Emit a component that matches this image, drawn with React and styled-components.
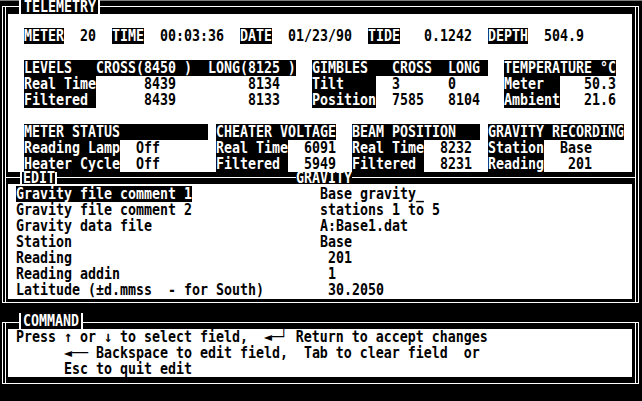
import React from 'react';
import styled, { createGlobalStyle } from 'styled-components';

const GlobalStyle = createGlobalStyle`
  html, body { margin: 0; padding: 0; background: #000; }
  #root { width: 642px; height: 401px; }
`;

const hl = (x, y, w) => `linear-gradient(#fff, #fff) ${x}px ${y}px / ${w}px 1px no-repeat`;
const vl = (x, y, h) => `linear-gradient(#fff, #fff) ${x}px ${y}px / 1px ${h} no-repeat`;
const sides = (y, h) => [vl(2, y, h), vl(5, y, h), vl(635, y, h), vl(638, y, h)];

const Screen = styled.div`
  width: 642px;
  height: 401px;
  overflow: hidden;
  background: #000;
  display: flex;
  flex-direction: column;
  font-family: "DejaVu Sans Mono", "Liberation Mono", monospace;
  font-weight: bold;
  font-size: 13.29px;
  color: #000;
`;

const Band = styled.div`
  flex: none;
  display: flex;
  align-items: stretch;
  height: ${(p) => p.$h}px;
  background: ${(p) => p.$lines.join(', ')}, #000;
`;

const Tab = styled.div`
  flex: none;
  box-sizing: border-box;
  margin-left: ${(p) => p.$at}px;
  padding: 0 ${(p) => p.$pr}px 0 ${(p) => p.$pl}px;
  border-left: ${(p) => (p.$bare ? '0' : '2px solid #fff')};
  border-right: ${(p) => (p.$bare ? '0' : '2px solid #fff')};
  background: #000;
  color: #fff;
`;

const Panel = styled.div`
  flex: none;
  display: flex;
  height: ${(p) => p.$h}px;
`;

const Rail = styled.div`
  flex: none;
  width: ${(p) => (p.$right ? 10 : 8)}px;
  background: ${(p) =>
      p.$right
        ? `${vl(3, 0, '100%')}, ${vl(6, 0, '100%')}`
        : `${vl(2, 0, '100%')}, ${vl(5, 0, '100%')}`},
    #000;
`;

const Body = styled.div`
  flex: 1;
  min-width: 0;
  display: flex;
  flex-direction: column;
  padding-top: ${(p) => p.$pt || 0}px;
  background: #fff;
  overflow: hidden;
`;

const Line = styled.div`
  flex: none;
  display: flex;
  height: 16px;
`;

const Cell = styled.span`
  flex: none;
  display: block;
  height: 16px;
  width: ${(p) => p.$n * 8}px;
  background: ${(p) => (p.$inv ? '#000' : 'transparent')};
  color: ${(p) => (p.$inv ? '#fff' : '#000')};
`;

const Txt = styled.span`
  display: block;
  white-space: pre;
  line-height: ${(p) => p.$lh || 16}px;
  transform: scaleY(1.15);
  transform-origin: 50% 45%;
`;

const C = ({ inv, children }) => (
  <Cell $n={children.length} $inv={inv}>
    <Txt>{children}</Txt>
  </Cell>
);

const gravityFields = [
  ['Gravity file comment 1', 'Base gravity_', true],
  ['Gravity file comment 2', 'stations 1 to 5'],
  ['Gravity data file', 'A:Base1.dat'],
  ['Station', 'Base'],
  ['Reading', ' 201'],
  ['Reading addin', ' 1'],
  ['Latitude (±d.mmss  - for South)', ' 30.2050'],
];

export default function App() {
  return (
    <>
      <GlobalStyle />
      <Screen>
        <Band
          $h={14}
          $lines={[
            'linear-gradient(#808080, #808080) 0 0 / 100% 1px no-repeat',
            hl(2, 6, 637),
            ...sides(6, '8px'),
          ]}
        >
          <Tab $at={19} $pl={3} $pr={2}>
            <Txt $lh={14}>TELEMETRY</Txt>
          </Tab>
        </Band>

        <Panel $h={158}>
          <Rail />
          <Body $pt={14}>
            <Line>
              <C>{'  '}</C>
              <C inv>METER</C>
              <C>{'  20  '}</C>
              <C inv>TIME</C>
              <C>{'  00:03:36  '}</C>
              <C inv>DATE</C>
              <C>{'  01/23/90  '}</C>
              <C inv>TIDE</C>
              <C>{'   0.1242  '}</C>
              <C inv>DEPTH</C>
              <C>{'  504.9'}</C>
            </Line>
            <Line />
            <Line>
              <C>{'  '}</C>
              <C inv>{'LEVELS   CROSS(8450 )  LONG(8125 )'}</C>
              <C>{'  '}</C>
              <C inv>{'GIMBLES   CROSS  LONG '}</C>
              <C>{'  '}</C>
              <C inv>{'TEMPERATURE °C'}</C>
            </Line>
            <Line>
              <C>{'  '}</C>
              <C inv>Real Time</C>
              <C>{'      8439         8134    '}</C>
              <C inv>{'Tilt    '}</C>
              <C>{'  3      0      '}</C>
              <C inv>{'Meter  '}</C>
              <C>{'   50.3'}</C>
            </Line>
            <Line>
              <C>{'  '}</C>
              <C inv>{'Filtered '}</C>
              <C>{'      8439         8133    '}</C>
              <C inv>Position</C>
              <C>{'  7585   8104   '}</C>
              <C inv>Ambient</C>
              <C>{'   21.6'}</C>
            </Line>
            <Line />
            <Line>
              <C>{'  '}</C>
              <C inv>{'METER STATUS           '}</C>
              <C>{' '}</C>
              <C inv>CHEATER VOLTAGE</C>
              <C>{'  '}</C>
              <C inv>{'BEAM POSITION   '}</C>
              <C>{' '}</C>
              <C inv>GRAVITY RECORDING</C>
            </Line>
            <Line>
              <C>{'  '}</C>
              <C inv>Reading Lamp</C>
              <C>{'  Off       '}</C>
              <C inv>Real Time</C>
              <C>{'  6091  '}</C>
              <C inv>Real Time</C>
              <C>{'  8232  '}</C>
              <C inv>Station</C>
              <C>{'  Base'}</C>
            </Line>
            <Line>
              <C>{'  '}</C>
              <C inv>Heater Cycle</C>
              <C>{'  Off       '}</C>
              <C inv>{'Filtered '}</C>
              <C>{'  5949  '}</C>
              <C inv>{'Filtered '}</C>
              <C>{'  8231  '}</C>
              <C inv>Reading</C>
              <C>{'   201'}</C>
            </Line>
          </Body>
          <Rail $right />
        </Panel>

        <Band $h={12} $lines={[...sides(0, '100%'), hl(5, 5, 631)]}>
          <Tab $at={20} $pl={1} $pr={0}>
            <Txt $lh={12}>EDIT</Txt>
          </Tab>
          <Tab $at={239} $pl={0} $pr={0} $bare>
            <Txt $lh={12}>GRAVITY</Txt>
          </Tab>
        </Band>

        <Panel $h={115}>
          <Rail />
          <Body $pt={2}>
            {gravityFields.map(([label, value, sel]) => (
              <Line key={label}>
                <C>{' '}</C>
                <C inv={sel}>{label}</C>
                <C>{' '.repeat(38 - label.length)}</C>
                <C>{value}</C>
              </Line>
            ))}
          </Body>
          <Rail $right />
        </Panel>

        <Band $h={14} $lines={[hl(2, 3, 637), ...sides(0, '4px')]} />

        <Band $h={16} $lines={[hl(2, 9, 637), ...sides(9, '7px')]}>
          <Tab $at={19} $pl={2} $pr={2}>
            <Txt $lh={16}>COMMAND</Txt>
          </Tab>
        </Band>

        <Panel $h={48}>
          <Rail />
          <Body>
            <Line>
              <C>{' '}</C>
              <C>{'Press ↑ or ↓ to select field,  ◄─┘ Return to accept changes'}</C>
            </Line>
            <Line>
              <C>{'       '}</C>
              <C>{'◄── Backspace to edit field,  Tab to clear field  or'}</C>
            </Line>
            <Line>
              <C>{'       '}</C>
              <C>{'Esc to quit edit'}</C>
            </Line>
          </Body>
          <Rail $right />
        </Panel>

        <Band $h={24} $lines={[hl(2, 6, 637), ...sides(0, '7px')]} />
      </Screen>
    </>
  );
}
